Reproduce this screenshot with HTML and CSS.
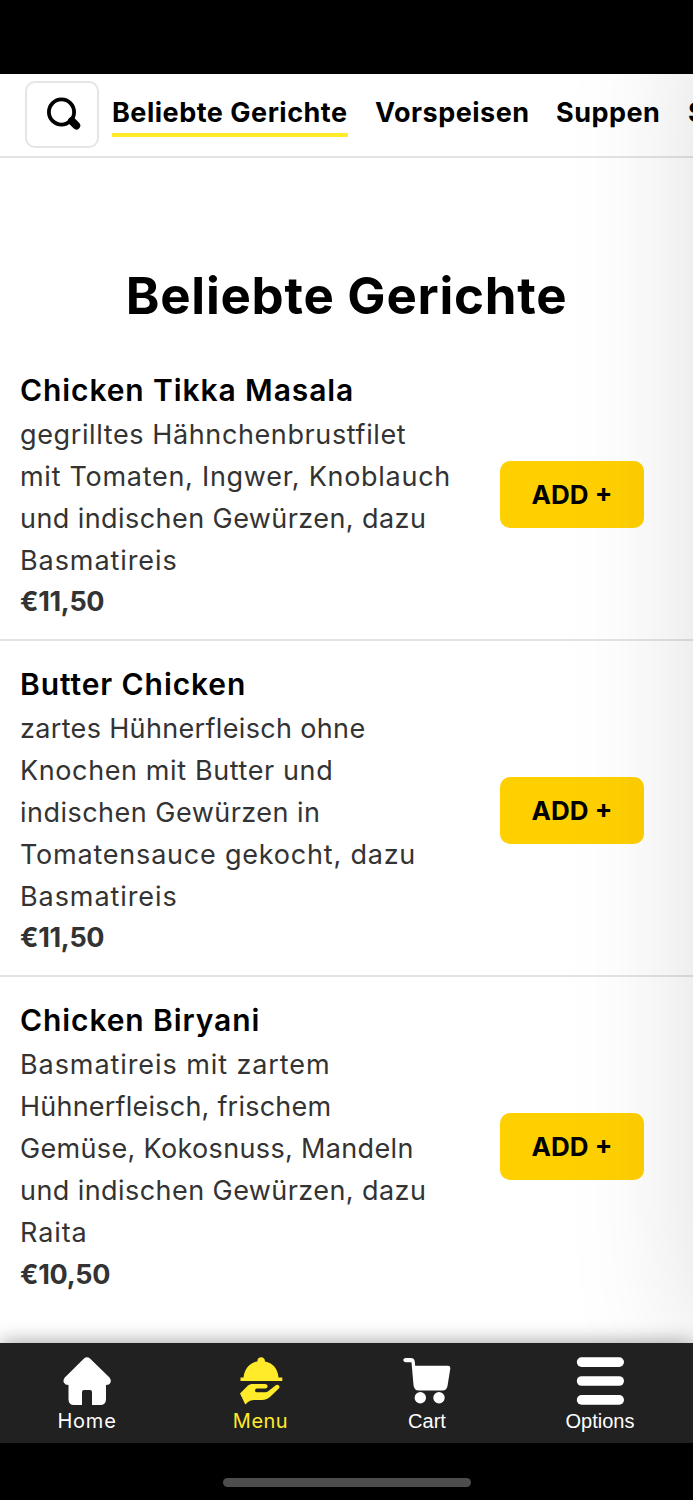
FILE: index.html
```html
<!DOCTYPE html>
<html lang="de">
<head>
<meta charset="utf-8">
<title>Beliebte Gerichte</title>
<link rel="stylesheet" href="styles.css">
</head>
<body>
<div class="statusbar"></div>
<header class="topbar">
  <button class="search" aria-label="Suche">
    <svg width="36" height="36" viewBox="0 0 36 36"><circle cx="15.500" cy="15" r="12.600" fill="none" stroke="#000" stroke-width="3.800"/><path d="M25.800 24 30.300 28.600" fill="none" stroke="#000" stroke-width="7.800" stroke-linecap="round"/></svg>
  </button>
  <nav class="tabs">
    <a class="tab tab-popular active">Beliebte Gerichte</a>
    <a class="tab tab-starters">Vorspeisen</a>
    <a class="tab tab-soups">Suppen</a>
    <a class="tab">Salate</a>
  </nav>
</header>
<main class="menu">
  <h1 class="heading">Beliebte Gerichte</h1>
  <article class="dish">
    <div class="info">
      <h2 class="name">Chicken Tikka Masala</h2>
      <p class="desc"><span class="ls-6">gegrilltes Hähnchenbrustfilet</span><br><span class="ls-7">mit Tomaten, Ingwer, Knoblauch</span><br><span class="ls-4">und indischen Gewürzen, dazu</span><br><span class="ls-9">Basmatireis</span></p>
      <p class="price">€11,50</p>
    </div>
    <button class="add">ADD +</button>
  </article>
  <article class="dish">
    <div class="info">
      <h2 class="name">Butter Chicken</h2>
      <p class="desc"><span class="ls-3">zartes Hühnerfleisch ohne</span><br><span class="ls-6">Knochen mit Butter und</span><br><span class="ls-5">indischen Gewürzen in</span><br><span class="ls-8">Tomatensauce gekocht, dazu</span><br><span class="ls-9">Basmatireis</span></p>
      <p class="price">€11,50</p>
    </div>
    <button class="add">ADD +</button>
  </article>
  <article class="dish">
    <div class="info">
      <h2 class="name">Chicken Biryani</h2>
      <p class="desc"><span class="ls-9">Basmatireis mit zartem</span><br><span class="ls-2">Hühnerfleisch, frischem</span><br><span class="ls-3">Gemüse, Kokosnuss, Mandeln</span><br><span class="ls-4">und indischen Gewürzen, dazu</span><br><span class="ls-9">Raita</span></p>
      <p class="price">€10,50</p>
    </div>
    <button class="add">ADD +</button>
  </article>
</main>
<div class="drawer"><div class="drawer-shadow"></div></div>
<footer class="bottomnav">
  <a class="item"><svg width="48" height="48" viewBox="0 0 48 48" fill="currentColor"><path d="M21 1.500Q24-.8 27 1.500L46.500 20.500Q48.500 23 47.500 25.500Q46.500 28 43 28V42Q43 48 37 48H29V35Q29 33 27 33H21Q19 33 19 35V48H11Q5.500 48 5.500 42V28Q2 28 .8 25.500Q-.2 23 1.800 20.500Z"/></svg><span class="label ls-8">Home</span></a>
  <a class="item current"><svg width="48" height="48" viewBox="0 0 48 48" fill="currentColor"><path d="M4 20.500H6.500C7.500 11.500 13 5.500 20.300 4.400C20.300-1.200 28-1.200 28 4.400C35.500 5.500 40.800 11.500 41.500 20.500H45.300V24H3.500V20.500Z"/><path d="M3 36.500 10.500 29C12 27.400 14 27 16 27H28C31.500 27 31.500 31.400 28 31.400H20Q18 31.400 18 33.400Q18 35.300 20 35.300H28.500Q30 35.300 31.200 34.300L38.500 28.500C41 26.500 43.800 29.500 41.800 31.500L34 39Q30 43 25 43H17Q13.500 43 11 45L8.300 47.500Z"/></svg><span class="label ls-5">Menu</span></a>
  <a class="item"><svg width="48" height="48" viewBox="0 0 48 48" fill="currentColor"><path d="M3 1H8Q11.500 1 11.800 5L12.200 8.800H45Q47.500 8.800 47.300 11.500L44.500 29Q43.500 33.500 39.500 33.500H16Q11 33.500 10.500 28L8.500 5.200H3C-.6 5.200-.6 1 3 1Z"/><circle cx="17.300" cy="40.800" r="5.700"/><circle cx="36" cy="40.800" r="5.700"/></svg><span class="label sans">Cart</span></a>
  <a class="item"><svg width="48" height="48" viewBox="0 0 48 48" fill="currentColor"><rect x=".8" width="47.200" height="9.600" y=".3" rx="4.800"/><rect x=".8" width="47.200" height="9.600" y="19.200" rx="4.800"/><rect x=".8" width="47.200" height="9.600" y="38.100" rx="4.800"/></svg><span class="label sans">Options</span></a>
</footer>
<div class="homebar"><div class="indicator"></div></div>
</body>
</html>
```
FILE: styles.css
```css
* { box-sizing: border-box; }
body { margin: 0; width: 693px; height: 1500px; overflow: hidden; position: relative; display: flex; flex-direction: column; background: #fff; color: #000; font-family: Inter, "Liberation Sans", sans-serif; }
h1, h2, p { margin: 0; }
button { font-family: inherit; color: #000; padding: 0; }
.statusbar { height: 74px; flex: none; background: #000; }
.topbar { height: 83.500px; flex: none; display: flex; align-items: flex-start; padding: 7px 0 0 25px; border-bottom: 2px solid #e3e3e3; overflow: hidden; }
.search { width: 74px; height: 67px; flex: none; display: flex; align-items: center; justify-content: center; border: 2px solid #e5e5e5; border-radius: 10px; background: #fff; padding-left: 3px; }
.tabs { display: flex; gap: 27px; padding: 8px 0 0 13px; }
.tab { flex: none; height: 48px; line-height: 47px; font-size: 27px; font-weight: 700; letter-spacing: .5px; white-space: nowrap; }
.tab-popular { width: 236px; }
.tab-starters { width: 154px; }
.tab-soups { width: 105px; }
.active { border-bottom: 4px solid #ffeb29; }
.menu { height: 1185px; flex: none; display: flex; flex-direction: column; }
.heading { flex: none; height: 189px; padding-top: 99px; line-height: 78px; font-size: 51px; font-weight: 700; letter-spacing: .75px; text-align: center; }
.dish { flex: none; display: flex; justify-content: space-between; align-items: center; padding: 20px 49px 15.500px 20px; border-bottom: 2px solid #e3e3e3; }
.dish:last-child { border-bottom: 0; }
.name { line-height: 47.500px; font-size: 30px; font-weight: 600; letter-spacing: .9px; white-space: nowrap; }
.desc { line-height: 41.850px; font-size: 27px; color: #333; white-space: nowrap; }
.price { line-height: 41.850px; font-size: 27px; font-weight: 700; letter-spacing: -.3px; color: #333; }
.ls-2 { letter-spacing: .22px; }
.ls-3 { letter-spacing: .34px; }
.ls-4 { letter-spacing: .43px; }
.ls-5 { letter-spacing: .48px; }
.ls-6 { letter-spacing: .61px; }
.ls-7 { letter-spacing: .72px; }
.ls-8 { letter-spacing: .79px; }
.ls-9 { letter-spacing: .92px; }
.add { width: 144px; height: 67px; border: 0; border-radius: 10px; background: #ffd000; font-size: 26px; font-weight: 700; }
.drawer { position: absolute; inset: 74px 0 58px; overflow: hidden; pointer-events: none; }
.drawer-shadow { position: absolute; left: 100%; top: -74px; width: 500px; height: 1342px; box-shadow: 0 0 120px rgba(0,0,0,.13); }
.bottomnav { height: 100px; flex: none; position: relative; display: grid; grid-template-columns: 174px 173px 160px 186px; background: #212121; color: #fff; box-shadow: 0 0 20px rgba(0,0,0,.4); }
.item { display: flex; flex-direction: column; align-items: center; padding-top: 14px; }
.label { line-height: 32px; font-size: 20px; }
.sans { font-family: "Liberation Sans", sans-serif; }
.current { color: #ffeb29; }
.homebar { flex: 1; position: relative; background: #000; display: flex; justify-content: center; padding-top: 35px; }
.indicator { width: 248px; height: 9px; border-radius: 5px; background: #4d4d4d; }
```
